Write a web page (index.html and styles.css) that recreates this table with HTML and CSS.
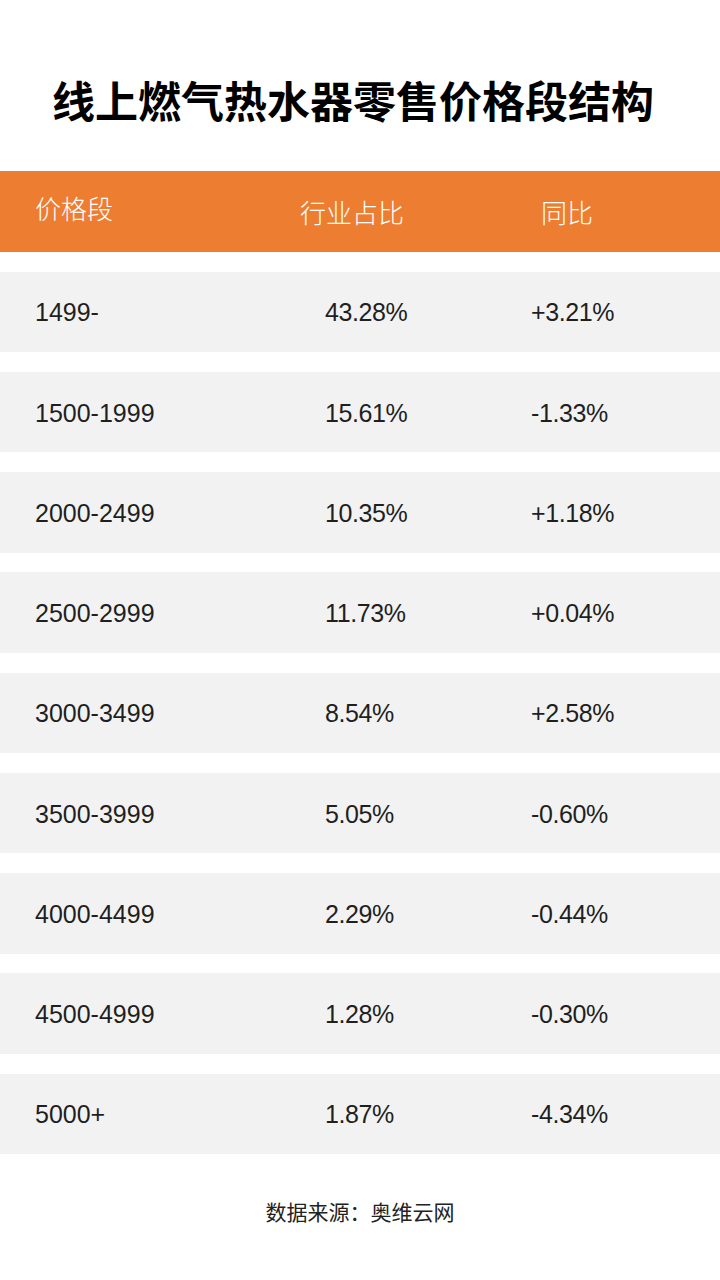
FILE: index.html
```html
<!DOCTYPE html>
<html lang="zh-CN">
<head>
<meta charset="utf-8">
<title>线上燃气热水器零售价格段结构</title>
<link rel="stylesheet" href="styles.css">
</head>
<body>
<div class="page">
  <h1 class="title">线上燃气热水器零售价格段结构</h1>
  <div class="thead">
    <div class="th th-range">价格段</div>
    <div class="th th-share">行业占比</div>
    <div class="th th-yoy">同比</div>
  </div>
  <div class="rows">
    <div class="row"><span class="c1">1499-</span><span class="c2">43.28%</span><span class="c3">+3.21%</span></div>
    <div class="row"><span class="c1">1500-1999</span><span class="c2">15.61%</span><span class="c3">-1.33%</span></div>
    <div class="row"><span class="c1">2000-2499</span><span class="c2">10.35%</span><span class="c3">+1.18%</span></div>
    <div class="row"><span class="c1">2500-2999</span><span class="c2">11.73%</span><span class="c3">+0.04%</span></div>
    <div class="row"><span class="c1">3000-3499</span><span class="c2">8.54%</span><span class="c3">+2.58%</span></div>
    <div class="row"><span class="c1">3500-3999</span><span class="c2">5.05%</span><span class="c3">-0.60%</span></div>
    <div class="row"><span class="c1">4000-4499</span><span class="c2">2.29%</span><span class="c3">-0.44%</span></div>
    <div class="row"><span class="c1">4500-4999</span><span class="c2">1.28%</span><span class="c3">-0.30%</span></div>
    <div class="row"><span class="c1">5000+</span><span class="c2">1.87%</span><span class="c3">-4.34%</span></div>
  </div>
  <div class="source">数据来源<span class="colon">：</span>奥维云网</div>
</div>
</body>
</html>
```
FILE: styles.css
```css
html, body {
  margin: 0;
  padding: 0;
  background: #ffffff;
}
.page {
  width: 720px;
  height: 1280px;
  display: flex;
  flex-direction: column;
  font-family: "Liberation Sans", "Noto Sans CJK SC", sans-serif;
  color: #1a1a1a;
}
.title {
  margin: 0;
  height: 171px;
  box-sizing: border-box;
  padding: 73px 0 0 52px;
  font-family: "Noto Sans CJK SC", sans-serif;
  font-weight: 700;
  font-size: 43px;
  line-height: 52px;
  color: #000000;
  white-space: nowrap;
}
.thead {
  height: 81px;
  background: #ed7d31;
  display: grid;
  grid-template-columns: 265px 241px 1fr;
  padding-left: 35px;
  align-items: center;
  color: #ffffff;
  font-family: "Noto Sans CJK SC", sans-serif;
  font-weight: 300;
  font-size: 26px;
}
.th-range { padding-bottom: 8px; }
.rows {
  display: flex;
  flex-direction: column;
  gap: 19.75px;
  padding-top: 19.5px;
}
.row {
  height: 80.5px;
  background: #f2f2f2;
  display: grid;
  grid-template-columns: 290px 206px 1fr;
  padding-left: 35px;
  align-items: center;
  font-size: 25px;
  color: #1f1f1f;
}
.row span { padding-top: 2px; }
.c2, .c3 { letter-spacing: -0.4px; }
.source {
  margin-top: 42px;
  text-align: center;
  font-family: "Noto Sans CJK SC", sans-serif;
  font-size: 21px;
  color: #222222;
}
.colon {
  font-family: "Noto Sans CJK TC", sans-serif;
}
```
